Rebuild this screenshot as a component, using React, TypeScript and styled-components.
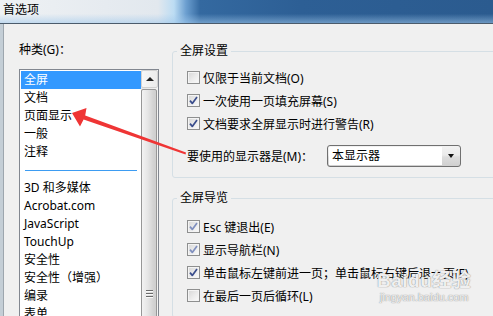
import React from 'react';
import styled, { createGlobalStyle } from 'styled-components';

const Global = createGlobalStyle`
  html, body { margin: 0; padding: 0; background: #f0f0f0; }
  body {
    font-family: "Noto Sans", "Noto Sans CJK SC", sans-serif;
    font-size: 12px;
    color: #000;
  }
  * { box-sizing: border-box; }
`;

const Window = styled.div`
  position: relative;
  width: 493px;
  height: 316px;
  overflow: hidden;
  background: #c4ced6;
  display: flex;
  flex-direction: column;
`;

const TitleBar = styled.div`
  flex: none;
  height: 24px;
  border-bottom: 1px solid #4b5b6b;
  display: flex;
  align-items: center;
  padding: 0 0 4px 3px;
  background:
    linear-gradient(to bottom, rgba(255,255,255,0) 60%, rgba(160,200,235,0.55) 100%),
    linear-gradient(to right, #eef1f4 0px, #e2e8ee 158px, #bcdcf3 174px, #6c9fd0 186px, #3469a0 200px, #2d5f95 300px, #2b5b8f 493px);
`;

const Title = styled.span`
  font-size: 12px;
  line-height: 16px;
  color: #000;
`;

const Body = styled.div`
  flex: 1;
  display: flex;
  margin-left: 3px;
  border-left: 1px solid #9da6ae;
  background: #f0f0f0;
  min-height: 0;
`;

const LeftPane = styled.div`
  flex: none;
  width: 155px;
  padding: 17px 0 0 15px;
  display: flex;
  flex-direction: column;
`;

const Label = styled.div`
  line-height: 18px;
  white-space: nowrap;
`;

const ListBox = styled.div`
  margin-top: 10px;
  width: 140px;
  height: 260px;
  border: 1px solid #828790;
  background: #fff;
  display: flex;
`;

const ItemList = styled.div`
  width: 120px;
  margin: 1px 0 0 1px;
  display: flex;
  flex-direction: column;
`;

const Item = styled.div<{ $selected?: boolean }>`
  height: 18px;
  line-height: 18px;
  padding-left: 3px;
  white-space: nowrap;
  background: ${p => (p.$selected ? '#3399ff' : 'transparent')};
  color: ${p => (p.$selected ? '#fff' : '#000')};
`;

const Separator = styled.div`
  height: 18px;
  display: flex;
  align-items: center;
  padding: 0 4px 0 4px;
  &::after {
    content: '';
    flex: 1;
    height: 1px;
    background: #3d9cf2;
  }
`;

const Scrollbar = styled.div`
  width: 17px;
  display: flex;
  flex-direction: column;
  background: linear-gradient(to right, #e4e4e4, #f4f4f4);
`;

const ArrowButton = styled.div`
  height: 18px;
  border: 1px solid #d2d2d2;
  border-radius: 2px;
  background: linear-gradient(to right, #f7f7f7, #ececec);
  display: flex;
  align-items: center;
  justify-content: center;
  &::before {
    content: '';
    border-left: 4px solid transparent;
    border-right: 4px solid transparent;
    border-bottom: 4px solid #222;
  }
`;

const Thumb = styled.div`
  margin: 1px 1px 0 0;
  height: 240px;
  border: 1px solid #979797;
  border-radius: 2px;
  background: linear-gradient(to right, #f3f3f3 0%, #e6e6e6 40%, #d3d3d3 80%, #cfcfcf 100%);
  display: flex;
  flex-direction: column;
  align-items: center;
  padding-top: 200px;
  gap: 1px;
`;

const Grip = styled.div`
  width: 7px;
  height: 1px;
  background: #6b6b6b;
  box-shadow: 0 1px 0 #fafafa;
  margin-bottom: 1px;
`;

const RightPane = styled.div`
  margin-left: 13px;
  padding-top: 18px;
  display: flex;
  flex-direction: column;
`;

const Group = styled.fieldset<{ $gap?: number }>`
  margin: ${p => p.$gap ?? 0}px 0 0 0;
  padding: 0;
  width: 330px;
  min-width: 0;
  border: 1px solid #d5dfe5;
  border-radius: 3px;
`;

const Legend = styled.legend`
  margin-left: 4px;
  padding: 0 3px;
  line-height: 18px;
  font-size: 12px;
`;

const Rows = styled.div<{ $top: number; $bottom: number }>`
  padding: ${p => p.$top}px 0 ${p => p.$bottom}px 14px;
  display: flex;
  flex-direction: column;
`;

const CheckRow = styled.label`
  height: 23px;
  display: flex;
  align-items: center;
  gap: 3px;
  white-space: nowrap;
`;

const Box = styled.span`
  flex: none;
  width: 13px;
  height: 13px;
  border: 1px solid #8e8f8f;
  background: linear-gradient(135deg, #d6d6d6 0%, #ececec 55%, #fbfbfb 100%);
  box-shadow: inset 0 0 0 1px #f4f4f4;
  display: flex;
  align-items: center;
  justify-content: center;
`;

const SelectRow = styled.div`
  margin-top: 10px;
  height: 22px;
  display: flex;
  align-items: center;
`;

const SelectLabel = styled.span`
  width: 140px;
  white-space: nowrap;
`;

const Select = styled.div`
  width: 134px;
  height: 22px;
  border: 1px solid #707070;
  border-radius: 3px;
  background: linear-gradient(to bottom, #f2f2f2 0%, #ebebeb 45%, #dddddd 55%, #cfcfcf 100%);
  display: flex;
`;

const SelectField = styled.div`
  flex: 1;
  margin: 1px 0 1px 1px;
  background: #fff;
  padding-left: 3px;
  line-height: 18px;
`;

const SelectButton = styled.div`
  width: 18px;
  display: flex;
  align-items: center;
  justify-content: center;
  &::before {
    content: '';
    border-left: 3.5px solid transparent;
    border-right: 3.5px solid transparent;
    border-top: 4px solid #111;
  }
`;

const Overlay = styled.svg`
  position: absolute;
  left: 0;
  top: 0;
  pointer-events: none;
`;

const Watermark = styled.div`
  position: absolute;
  left: 377px;
  top: 271px;
  display: flex;
  flex-direction: column;
  align-items: center;
  color: rgba(255, 255, 255, 0.88);
  text-shadow: 0 0 1px rgba(110, 110, 110, 0.7), 0 0 1px rgba(110, 110, 110, 0.5);
  pointer-events: none;
`;

const WmLogo = styled.div`
  font-family: "Liberation Sans", "Noto Sans CJK SC", sans-serif;
  font-weight: bold;
  font-size: 19px;
  line-height: 20px;
  letter-spacing: 0.5px;
  white-space: nowrap;
`;

const WmUrl = styled.div`
  font-family: "Liberation Sans", sans-serif;
  font-size: 11px;
  line-height: 13px;
  white-space: nowrap;
`;

const Check = ({ checked, muted }: { checked?: boolean; muted?: boolean }) => (
  <Box>
    {checked && (
      <svg width="11" height="11" viewBox="0 0 11 11">
        <polyline
          points="2,5.6 4.3,8.4 9,2"
          fill="none"
          stroke={muted ? '#7f8fbe' : '#3a4d8c'}
          strokeWidth="1.7"
          strokeLinejoin="round"
        />
      </svg>
    )}
  </Box>
);

const items = ['全屏', '文档', '页面显示', '一般', '注释'];
const items2 = ['3D 和多媒体', 'Acrobat.com', 'JavaScript', 'TouchUp', '安全性', '安全性（增强）', '编录', '表单'];

export default function App() {
  return (
    <Window>
      <Global />
      <TitleBar>
        <Title>首选项</Title>
      </TitleBar>
      <Body>
        <LeftPane>
          <Label>种类(G)：</Label>
          <ListBox>
            <ItemList>
              {items.map((t, i) => (
                <Item key={t} $selected={i === 0}>{t}</Item>
              ))}
              <Separator />
              {items2.map(t => (
                <Item key={t}>{t}</Item>
              ))}
            </ItemList>
            <Scrollbar>
              <ArrowButton />
              <Thumb>
                <Grip />
                <Grip />
                <Grip />
              </Thumb>
            </Scrollbar>
          </ListBox>
        </LeftPane>
        <RightPane>
          <Group>
            <Legend>全屏设置</Legend>
            <Rows $top={6} $bottom={10}>
              <CheckRow><Check />仅限于当前文档(O)</CheckRow>
              <CheckRow><Check checked />一次使用一页填充屏幕(S)</CheckRow>
              <CheckRow><Check checked />文档要求全屏显示时进行警告(R)</CheckRow>
              <SelectRow>
                <SelectLabel>要使用的显示器是(M)：</SelectLabel>
                <Select>
                  <SelectField>本显示器</SelectField>
                  <SelectButton />
                </Select>
              </SelectRow>
            </Rows>
          </Group>
          <Group $gap={11}>
            <Legend>全屏导览</Legend>
            <Rows $top={8} $bottom={10}>
              <CheckRow><Check checked muted />Esc 键退出(E)</CheckRow>
              <CheckRow><Check checked muted />显示导航栏(N)</CheckRow>
              <CheckRow><Check checked />单击鼠标左键前进一页；单击鼠标右键后退一页(F)</CheckRow>
              <CheckRow><Check />在最后一页后循环(L)</CheckRow>
            </Rows>
          </Group>
        </RightPane>
      </Body>
      <Overlay width="493" height="316" viewBox="0 0 493 316">
        <polygon
          points="72,113 86.5,108 85.2,115.6 186,152.6 185.6,154.6 83.6,119.6 80,126.5"
          fill="#ef3535"
        />
      </Overlay>
      <Watermark>
        <WmLogo>Baidu经验</WmLogo>
        <WmUrl>jingyan.baidu.com</WmUrl>
      </Watermark>
    </Window>
  );
}
